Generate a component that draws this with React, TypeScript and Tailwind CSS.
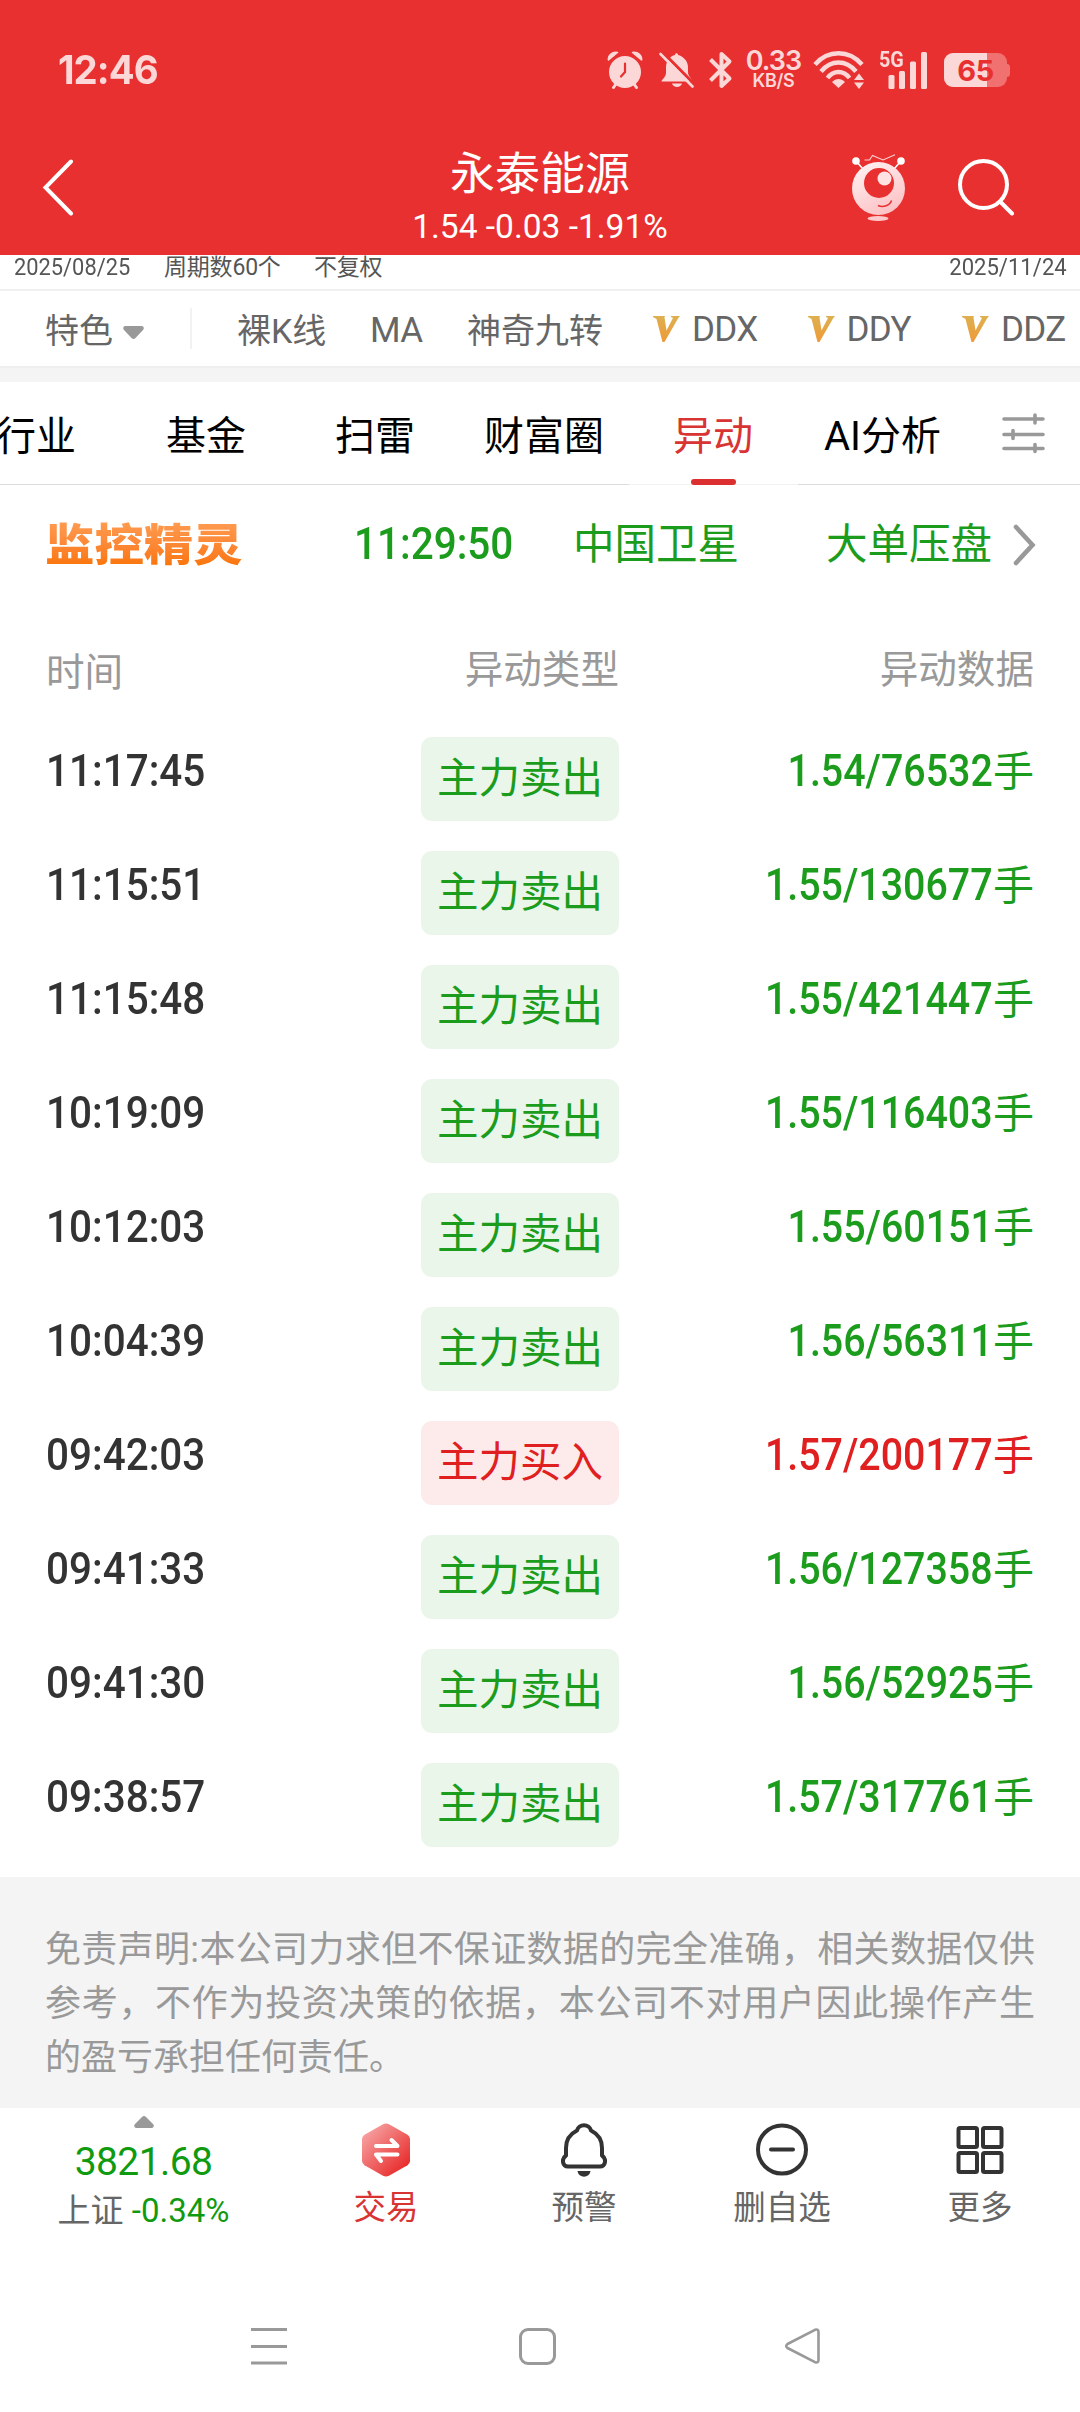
import type { ReactNode } from "react";

type Trade = {
  time: string;
  side: "sell" | "buy";
  data: string;
};

const TRADES: Trade[] = [
  { time: "11:17:45", side: "sell", data: "1.54/76532" },
  { time: "11:15:51", side: "sell", data: "1.55/130677" },
  { time: "11:15:48", side: "sell", data: "1.55/421447" },
  { time: "10:19:09", side: "sell", data: "1.55/116403" },
  { time: "10:12:03", side: "sell", data: "1.55/60151" },
  { time: "10:04:39", side: "sell", data: "1.56/56311" },
  { time: "09:42:03", side: "buy", data: "1.57/200177" },
  { time: "09:41:33", side: "sell", data: "1.56/127358" },
  { time: "09:41:30", side: "sell", data: "1.56/52925" },
  { time: "09:38:57", side: "sell", data: "1.57/317761" },
];

function StatusBar() {
  return (
    <div className="flex h-[138px] items-center pt-[2px] pl-[58px] text-[#fbd7d7]">
      <div className="w-[549px] font-['Inter'] text-[40px] leading-none font-bold">
        <span className="inline-block origin-left scale-x-[0.960] tracking-[-1px]">12:46</span>
      </div>
      <svg width="36" height="38" viewBox="0 0 36 38" fill="currentColor">
        <circle cx="18" cy="21" r="16" />
        <path d="M1.500 9C.5 5 5 .5 10.500 1.500ZM34.500 9C35.500 5 31 .5 25.500 1.500Z" stroke="currentColor" strokeWidth="1.500" strokeLinejoin="round" />
        <path d="M9 33 6.500 36.500M27 33l2.500 3.500" stroke="currentColor" strokeWidth="3" strokeLinecap="round" />
        <path d="M18 12.500v8.500l-4 4.500" fill="none" stroke="#e83030" strokeWidth="2.200" strokeLinecap="round" />
      </svg>
      <svg className="ml-4" width="36" height="36" viewBox="0 0 36 36" fill="currentColor">
        <path d="M2.500 29.500c0-2 4.500-4 4.500-9v-5C7 9 11 4 16 3c0-2.500 3-2.500 3 0 5 1 10 6 10 12v5c0 5 4 6 4 9.500Z" />
        <path d="M13 31.500h10c-1 4.500-9 4.500-10 0Z" />
        <path d="M4 .5 37 34" stroke="#e83030" strokeWidth="3" />
        <path d="M1.500 2 33.500 34.500" stroke="currentColor" strokeWidth="2.600" strokeLinecap="round" />
      </svg>
      <svg className="ml-[14px]" width="24" height="38" viewBox="0 0 24 38" fill="none" stroke="currentColor" strokeWidth="4" strokeLinejoin="round">
        <path d="m1.500 8.500 19 19L12.500 35V3l8 7.500-19 19" />
      </svg>
      <div className="ml-3 flex w-[57px] flex-col items-center font-['Inter'] font-semibold">
        <span className="h-[21px] text-[27px] leading-5 tracking-[-1px]">0.33</span>
        <span className="h-[17px] text-[18px] leading-[17px] tracking-[-0.3px]">KB/S</span>
      </div>
      <svg className="ml-[11px]" width="53" height="38" viewBox="0 0 53 38" fill="none" stroke="currentColor" strokeWidth="4.400">
        <path d="M2 13.500C15-1.500 36-1.500 49 13.500M8 20.500c10-12 25-12 35 0M14.500 27c6-8 16-8 22 0" />
        <path d="M19 31c4-4 9-4 13 0l-6.500 6Z" fill="currentColor" stroke="none" />
        <path d="m41 29 5-6.500 5 6.500ZM41 31.500h10L46 38Z" fill="currentColor" stroke="none" />
      </svg>
      <div className="relative ml-[13px]">
        <svg width="49" height="38" viewBox="0 0 49 38" fill="currentColor">
          <rect x="9.500" y="24" width="6" height="14" rx="1.500" />
          <rect x="20" y="20" width="6" height="18" rx="1.500" />
          <rect x="31" y="10.500" width="6" height="27.500" rx="1.500" />
          <rect x="42" y="1" width="6" height="37" rx="1.500" />
        </svg>
        <span className="absolute top-0 left-0 origin-left scale-x-[0.9] font-['Roboto'] text-[22px] leading-[18px] font-bold">
          5G
        </span>
      </div>
      <div className="relative ml-4 flex items-center">
        <div className="flex h-[34px] w-[63px] overflow-hidden rounded-[9px] bg-[#f17070]">
          <div className="w-[43px] bg-[#fbd7d7]" />
        </div>
        <div className="h-[13px] w-[3px] rounded-r bg-[#f17070]" />
        <span className="absolute inset-y-0 left-0 w-[63px] text-center font-['Inter'] text-[29px] leading-[35px] font-bold tracking-[-0.5px] text-[#e83030]">
          65
        </span>
      </div>
    </div>
  );
}

function RobotIcon() {
  return (
    <svg width="54" height="68" viewBox="0 0 54 68">
      <defs>
        <linearGradient id="robot" x1="0.2" y1="0" x2="0.7" y2="1">
          <stop offset="0" stopColor="#fff1f1" />
          <stop offset="1" stopColor="#fdc0c4" />
        </linearGradient>
      </defs>
      <path d="M4 7l7 8M49 7l-7 8" stroke="#fff" strokeWidth="1.600" />
      <circle cx="4" cy="7" r="3.800" fill="#fff" />
      <circle cx="49" cy="7" r="3.800" fill="#fff" />
      <path d="M12.500 6h5l3-4.500 10.500 4.500L43 .8" fill="none" stroke="#fbd0d0" strokeWidth="1.100" />
      <circle cx="26.500" cy="34.500" r="26.500" fill="url(#robot)" />
      <circle cx="27" cy="29" r="15" fill="#e83030" />
      <circle cx="32.500" cy="24.500" r="7" fill="#ffe2e2" />
      <path d="M26 51.500c5 2.500 12 0 13.500-5" fill="none" stroke="#e83030" strokeWidth="1.500" />
      <ellipse cx="26" cy="64.500" rx="10.500" ry="2.500" fill="#fdc8ca" />
    </svg>
  );
}

function Header() {
  return (
    <header className="bg-[#e83030]">
      <StatusBar />
      <div className="grid h-[117px] grid-cols-[270px_540px_270px] text-white">
        <svg className="mt-[21px] ml-[42px]" width="32" height="57" viewBox="0 0 32 57" fill="none" stroke="currentColor" strokeWidth="4" strokeLinecap="round">
          <path d="M29 2.500 3.500 28.500 29 54.500" />
        </svg>
        <div className="flex flex-col items-center gap-[7px] pt-[12px]">
          <h1 className="text-[45px] leading-[50px]">永泰能源</h1>
          <p className="text-[33.500px] leading-[40px]">1.54 -0.03 -1.91%</p>
        </div>
        <div className="flex items-start gap-[51px] pt-[16px] pl-[42px]">
          <RobotIcon />
          <svg className="mt-1" width="58" height="58" viewBox="0 0 58 58" fill="none" stroke="currentColor" strokeWidth="4" strokeLinecap="round">
            <circle cx="26.500" cy="26.500" r="23.500" />
            <path d="m43 43.500 12 12" />
          </svg>
        </div>
      </div>
    </header>
  );
}

function PeriodBar() {
  return (
    <div className="flex h-9 items-start border-b-2 border-[#f0f0f0] pr-[13px] pl-[14px] text-[24px] leading-[25px] text-[#555]">
      <span className="w-[150px]">
        <span className="inline-block origin-left scale-x-[0.91]">2025/08/25</span>
      </span>
      <span className="w-[150px] text-[23px] tracking-[-0.2px]">周期数60个</span>
      <span className="text-[23px] tracking-[-0.2px]">不复权</span>
      <span className="ml-auto origin-right scale-x-[0.92]">2025/11/24</span>
    </div>
  );
}

function VipItem({ label }: { label: string }) {
  return (
    <div className="flex w-[154.500px] shrink-0 items-center gap-3">
      <svg width="27" height="26" viewBox="0 0 27 26">
        <defs>
          <linearGradient id="vip" x1="0" y1="0" x2="0" y2="1">
            <stop offset="0" stopColor="#ddb050" />
            <stop offset="1" stopColor="#f09a38" />
          </linearGradient>
        </defs>
        <path d="M0 0h12l-.5 1.500 2 13L20 2 18 1V0h9L25 2.500 11.500 26H9.500L3.500 3 0 1Z" fill="url(#vip)" />
      </svg>
      <span className="pt-[2px] text-[35px] tracking-[-0.6px]">{label}</span>
    </div>
  );
}

function IndicatorBar() {
  return (
    <div className="flex h-[77px] items-center overflow-hidden border-b-2 border-[#efefef] pl-[45px] text-[34px] leading-none whitespace-nowrap text-[#666]">
      <span className="w-[78px] shrink-0 pt-[4px]">特色</span>
      <svg className="mt-2 shrink-0" width="21" height="13" viewBox="0 0 21 13" fill="#999">
        <path d="M2 0h17q3 1 1 4l-7.500 8q-2 2-4 0L1 4Q-1 1 2 0Z" />
      </svg>
      <div className="ml-[46px] h-[41px] w-[2px] shrink-0 bg-[#f2f2f2]" />
      <span className="ml-[45px] w-[133px] shrink-0 pt-[4px]">裸K线</span>
      <span className="w-[97px] shrink-0 pt-[3px] text-[35px] tracking-[-0.6px]">MA</span>
      <span className="w-[186px] shrink-0 pt-[4px]">神奇九转</span>
      <VipItem label="DDX" />
      <VipItem label="DDY" />
      <VipItem label="DDZ" />
    </div>
  );
}

function Tabs() {
  return (
    <nav className="flex h-[103px] items-stretch overflow-hidden text-[40px] leading-[109px] whitespace-nowrap text-black">
      <div className="flex w-[629px] shrink-0 border-b border-[#ddd]">
        <span className="-ml-1 w-[170px] shrink-0">行业</span>
        <span className="w-[169px] shrink-0">基金</span>
        <span className="w-[149px] shrink-0">扫雷</span>
        <span className="shrink-0">财富圈</span>
      </div>
      <div className="relative w-[169px] shrink-0 border-b border-[#f2f2f2] pl-[44px] text-[#d93434]">
        异动
        <div className="absolute bottom-[-1px] left-[62px] h-[6px] w-[45px] rounded-[3px] bg-[#dc3030]" />
      </div>
      <div className="flex flex-1 border-b border-[#ddd] pl-[26px]">
        <span className="w-[178px] shrink-0">AI分析</span>
        <svg className="mt-[31px]" width="43" height="41" viewBox="0 0 43 41" stroke="#999" strokeWidth="3.600" strokeLinecap="round">
          <path d="M2 6h39M2 21.500h39M2 35.500h39M33 2v8M11 17.500v8M33 31.500v7" />
        </svg>
      </div>
    </nav>
  );
}

function AlertRow() {
  return (
    <div className="flex h-[117px] items-center pt-[2px] pl-[46px] text-[41.500px] leading-none whitespace-nowrap text-[#1c9c1c]">
      <div className="w-[308px]">
        <span className="inline-block origin-left -translate-x-px -translate-y-[2px] scale-x-[1.110] bg-linear-to-b from-[#ff9f55] to-[#fa7400] bg-clip-text font-['Noto_Sans_CJK_SC'] text-[44.500px] leading-[50px] font-black text-transparent">
          监控精灵
        </span>
      </div>
      <div className="w-[219px] text-[43.500px] font-medium">
        <span className="inline-block origin-left scale-x-[0.930]">11:29:50</span>
      </div>
      <span className="w-[253px]">中国卫星</span>
      <span className="w-[187px]">大单压盘</span>
      <svg width="23" height="42" viewBox="0 0 23 42" fill="none" stroke="#999" strokeWidth="4.600" strokeLinecap="round">
        <path d="M3 3 19.500 21 3 39" />
      </svg>
    </div>
  );
}

function TradeRow({ trade }: { trade: Trade }) {
  const buy = trade.side === "buy";
  return (
    <div className="grid h-[114px] grid-cols-[375px_198px_1fr] items-start px-[46px] text-[43.500px] leading-[70px] font-medium">
      <span className="origin-left scale-x-[0.930] text-[#333]">{trade.time}</span>
      <span
        className={
          buy
            ? "h-[84px] rounded-[11px] bg-[#fdebeb] text-center text-[41.500px] leading-[84px] font-normal text-[#e02020]"
            : "h-[84px] rounded-[11px] bg-[#ebf6eb] text-center text-[41.500px] leading-[84px] font-normal text-[#1c9c1c]"
        }
      >
        {buy ? "主力买入" : "主力卖出"}
      </span>
      <span className={buy ? "flex justify-end text-[#e02020]" : "flex justify-end text-[#1c9c1c]"}>
        <span className="origin-right scale-x-[0.905]">{trade.data}</span>
        <span className="text-[41px] font-normal">手</span>
      </span>
    </div>
  );
}

function TradeTable() {
  return (
    <section>
      <div className="grid h-[135px] grid-cols-[375px_198px_1fr] items-center px-[46px] pt-[2px] text-[38.600px] leading-none text-[#999]">
        <span className="pt-[6px]">时间</span>
        <span className="text-right">异动类型</span>
        <span className="text-right">异动数据</span>
      </div>
      {TRADES.map((trade) => (
        <TradeRow key={trade.time} trade={trade} />
      ))}
    </section>
  );
}

function BarItem({ label, active, children }: { label: string; active?: boolean; children: ReactNode }) {
  return (
    <div className="flex w-[198px] flex-col items-center pt-[15px]">
      <div className="flex h-[53px] items-center">{children}</div>
      <span className={active ? "mt-[14px] leading-9 text-[#d93434]" : "mt-[14px] leading-9 text-[#666]"}>
        {label}
      </span>
    </div>
  );
}

function BottomBar() {
  return (
    <div className="flex h-[172px] text-[32.500px]">
      <div className="flex w-[287px] flex-col items-center pt-2">
        <svg width="20" height="12" viewBox="0 0 20 12" fill="#999">
          <path d="M2 12h16q3-1 1-4l-7-7q-2-2-4 0L1 8q-2 3 1 4Z" />
        </svg>
        <span className="mt-[14px] text-[39px] leading-10 tracking-[-0.600px] text-[#109a10]">3821.68</span>
        <span className="mt-[9px] text-[33px] leading-10 whitespace-pre text-[#666]">
          上证 <span className="text-[#109a10]">-0.34%</span>
        </span>
      </div>
      <BarItem label="交易" active>
        <svg width="50" height="54" viewBox="0 0 50 54">
          <defs>
            <linearGradient id="deal" x1="0.1" y1="0.1" x2="0.85" y2="0.9">
              <stop offset="0" stopColor="#f7a3a3" />
              <stop offset="1" stopColor="#e82b2b" />
            </linearGradient>
          </defs>
          <path d="M22 1.200q3-1.500 6 0l18.500 10.500Q49 13.500 49 16v22q0 2.500-2.500 4.200L28 52.800q-3 1.500-6 0L3.500 42.200Q1 40.500 1 38V16q0-2.500 2.500-4.300Z" fill="url(#deal)" />
          <path d="M15 23h21.500L30.500 17M36.500 31.500H15l5 6.500" fill="none" stroke="#fff" strokeWidth="4" strokeLinecap="round" strokeLinejoin="round" />
        </svg>
      </BarItem>
      <BarItem label="预警">
        <svg width="46" height="54" viewBox="0 0 46 54" fill="none" stroke="#333" strokeWidth="4">
          <path d="M16 7.500C17.500.5 28.500.5 30 7.500 37 11 41 17 41 25v7.500c5 3.500 3.500 11-2 11H7c-5.500 0-7-7.500-2-11V25C5 17 9 11 16 7.500Z" strokeLinejoin="round" />
          <path d="M16.500 48h13c-1 7.500-12 7.500-13 0Z" fill="#333" stroke="none" />
        </svg>
      </BarItem>
      <BarItem label="删自选">
        <svg width="52" height="53" viewBox="0 0 52 53" fill="none" stroke="#333" strokeWidth="4">
          <circle cx="26" cy="26.500" r="24" />
          <path d="M15 26.500h22" strokeLinecap="round" />
        </svg>
      </BarItem>
      <BarItem label="更多">
        <svg width="48" height="50" viewBox="0 0 48 50" fill="none" stroke="#333" strokeWidth="4">
          <rect x="2.500" y="3" width="18.500" height="19" rx="1.500" />
          <rect x="27" y="3" width="18.500" height="19" rx="1.500" />
          <rect x="2.500" y="28" width="18.500" height="19" rx="1.500" />
          <rect x="27" y="28" width="18.500" height="19" rx="1.500" />
        </svg>
      </BarItem>
    </div>
  );
}

function SystemNav() {
  return (
    <div className="flex h-[132px] items-center pl-[251px]">
      <svg width="36" height="37" viewBox="0 0 36 37" stroke="#999" strokeWidth="3">
        <path d="M0 1.500h36M0 18.500h36M0 35h36" />
      </svg>
      <div className="ml-[232px] size-[37px] rounded-[9px] border-3 border-[#999]" />
      <svg className="ml-[229px]" width="36" height="36" viewBox="0 0 36 36" fill="none" stroke="#999" strokeWidth="2.600" strokeLinejoin="round">
        <path d="M2.500 16 30 1.800q3.500-1 3.500 2.200v28q0 3.200-3.500 2.200L2.500 20q-2.500-2 0-4Z" />
      </svg>
    </div>
  );
}

export default function App() {
  return (
    <div className="flex h-[2412px] w-[1080px] flex-col overflow-hidden bg-white font-['Roboto','Noto_Sans_CJK_SC',sans-serif]">
      <Header />
      <PeriodBar />
      <IndicatorBar />
      <div className="h-[14px] bg-[#f4f4f4]" />
      <Tabs />
      <AlertRow />
      <TradeTable />
      <p className="h-[231px] bg-[#f4f4f4] px-[45px] pt-[46px] text-justify text-[36px] leading-[54px] text-[#999]">
        免责声明:本公司力求但不保证数据的完全准确，相关数据仅供参考，不作为投资决策的依据，本公司不对用户因此操作产生的盈亏承担任何责任。
      </p>
      <BottomBar />
      <SystemNav />
    </div>
  );
}
